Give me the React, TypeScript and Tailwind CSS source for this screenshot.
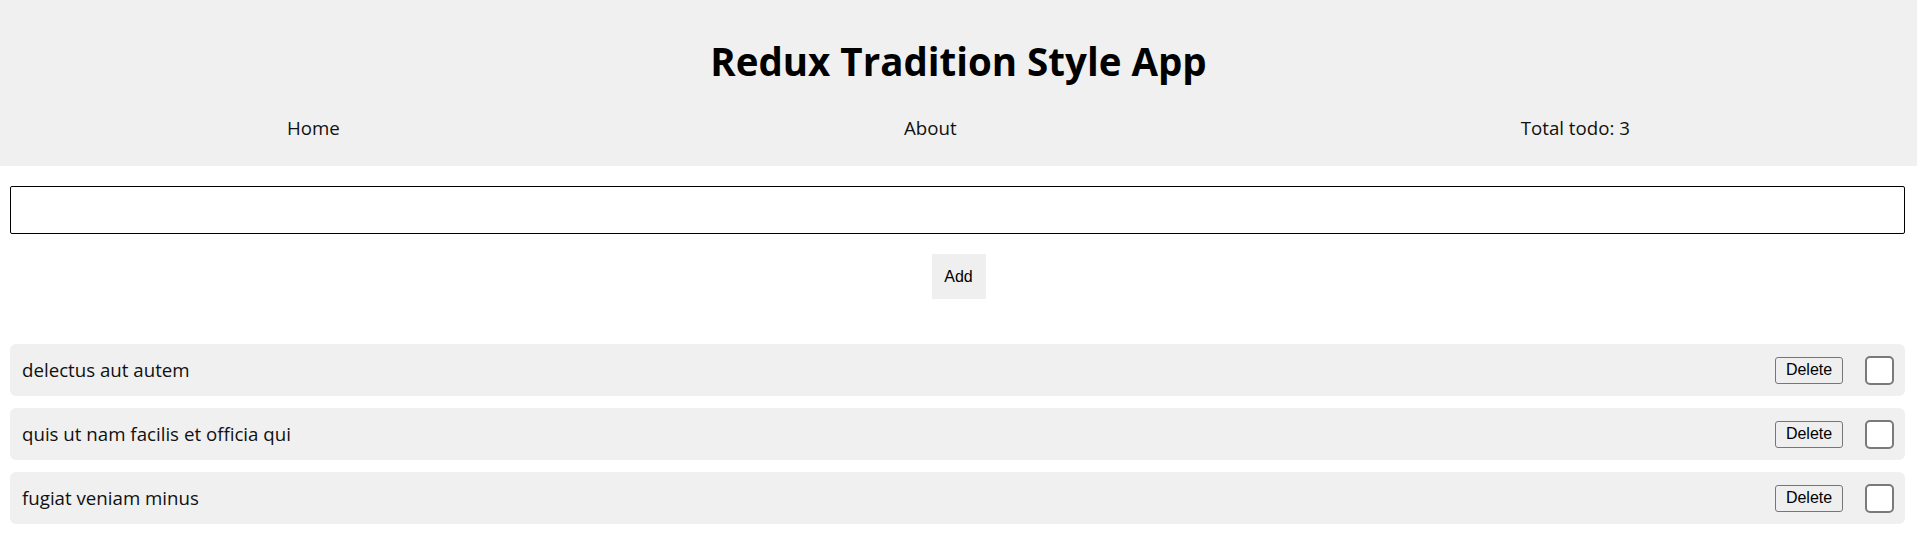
import React, { useState } from 'react';

const sans = { fontFamily: '"Open Sans", "Noto Sans", sans-serif' };

export default function App() {
  const [todos, setTodos] = useState([
    { id: 1, title: 'delectus aut autem', done: false },
    { id: 2, title: 'quis ut nam facilis et officia qui', done: false },
    { id: 3, title: 'fugiat veniam minus', done: false },
  ]);
  const [text, setText] = useState('');

  const addTodo = () => {
    if (!text.trim()) return;
    setTodos([...todos, { id: Date.now(), title: text, done: false }]);
    setText('');
  };

  return (
    <div className="min-h-screen bg-white text-[#111]" style={sans}>
      {/* header */}
      <header className="bg-[#f0f0f0] h-[166px] flex flex-col">
        <h1 className="pt-[35px] text-center text-[38.5px] font-bold leading-[52px] text-black">
          Redux Tradition Style App
        </h1>
        <nav className="mt-[28px] flex justify-around px-[5px] text-[18.7px] leading-[26px]">
          <a className="cursor-pointer">Home</a>
          <a className="cursor-pointer">About</a>
          <span>Total todo: {todos.length}</span>
        </nav>
      </header>

      {/* add form */}
      <div className="pt-[20px] flex flex-col items-center">
        <input
          value={text}
          onChange={(e) => setText(e.target.value)}
          className="ml-[10px] mr-[12px] self-stretch h-[48px] border border-black rounded-[2px] px-2 outline-none"
        />
        <button
          onClick={addTodo}
          className="mt-[20px] w-[54px] h-[45px] bg-[#efefef] text-[16px] text-black font-['Liberation_Sans',Arial,sans-serif]"
        >
          Add
        </button>
      </div>

      {/* todo list */}
      <ul className="mt-[45px] ml-[10px] mr-[12px] flex flex-col gap-[12px]">
        {todos.map((todo) => (
          <li
            key={todo.id}
            className="h-[52px] bg-[#f0f0f0] rounded-md flex items-center pl-[12px] pr-[11px] text-[18.7px] leading-[26px]"
          >
            <span className="flex-1">{todo.title}</span>
            <button
              onClick={() => setTodos(todos.filter((t) => t.id !== todo.id))}
              className="w-[68px] h-[27px] border border-[#767676] rounded-[3px] bg-[#efefef] text-[16px] text-black leading-none font-['Liberation_Sans',Arial,sans-serif]"
            >
              Delete
            </button>
            <input
              type="checkbox"
              checked={todo.done}
              onChange={() =>
                setTodos(todos.map((t) => (t.id === todo.id ? { ...t, done: !t.done } : t)))
              }
              className="ml-[22px] w-[29px] h-[29px] appearance-none border-2 border-[#7a7a7a] rounded-[5px] bg-white"
            />
          </li>
        ))}
      </ul>
    </div>
  );
}
